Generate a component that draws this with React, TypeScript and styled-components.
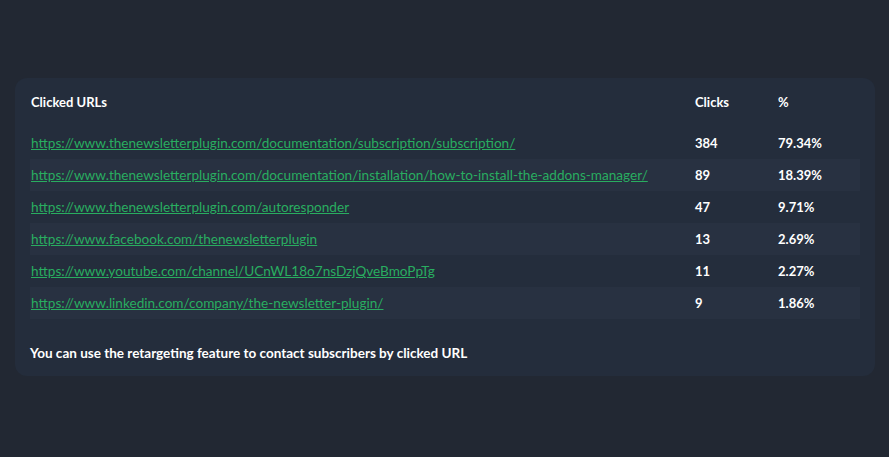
import React from "react";
import styled, { createGlobalStyle } from "styled-components";

const Global = createGlobalStyle`
  html, body { margin: 0; padding: 0; background: #222833; }
  body { font-family: "Segoe UI", "Lato", "Noto Sans", sans-serif; }
`;

const Page = styled.div`
  width: 889px;
  height: 457px;
  background: #222833;
  padding: 78px 14px 0 15px;
  box-sizing: border-box;
`;

const Card = styled.section`
  background: #242d3c;
  border-radius: 12px;
  padding: 15px 15px 14px 15px;
  box-sizing: border-box;
  height: 298px;
`;

const Row = styled.div<{ $striped?: boolean; $head?: boolean }>`
  display: grid;
  grid-template-columns: 1fr 83px 82px;
  align-items: center;
  height: ${(p) => (p.$head ? "18px" : "32px")};
  margin-bottom: ${(p) => (p.$head ? "16px" : "0")};
  background: ${(p) => (p.$striped ? "#283141" : "transparent")};
`;

const HeadCell = styled.div`
  color: #ffffff;
  font-weight: 700;
  font-size: 13px;
  line-height: 18px;
  padding-left: 1px;
`;

const LinkCell = styled.a`
  color: #29ad60;
  font-size: 13.6px;
  line-height: 18px;
  text-decoration: underline;
  padding-left: 1px;
  justify-self: start;
`;

const NumCell = styled.div`
  color: #ffffff;
  font-weight: 700;
  font-size: 13px;
  line-height: 18px;
`;

const Note = styled.p`
  margin: 25px 0 0 0;
  color: #ffffff;
  font-weight: 700;
  font-size: 13.5px;
  line-height: 18px;
`;

const rows = [
  ["https://www.thenewsletterplugin.com/documentation/subscription/subscription/", "384", "79.34%"],
  ["https://www.thenewsletterplugin.com/documentation/installation/how-to-install-the-addons-manager/", "89", "18.39%"],
  ["https://www.thenewsletterplugin.com/autoresponder", "47", "9.71%"],
  ["https://www.facebook.com/thenewsletterplugin", "13", "2.69%"],
  ["https://www.youtube.com/channel/UCnWL18o7nsDzjQveBmoPpTg", "11", "2.27%"],
  ["https://www.linkedin.com/company/the-newsletter-plugin/", "9", "1.86%"],
];

export default function App() {
  return (
    <Page>
      <Global />
      <Card>
        <Row $head>
          <HeadCell>Clicked URLs</HeadCell>
          <NumCell>Clicks</NumCell>
          <NumCell>%</NumCell>
        </Row>
        {rows.map(([url, clicks, pct], i) => (
          <Row key={url} $striped={i % 2 === 1}>
            <LinkCell href="#">{url}</LinkCell>
            <NumCell>{clicks}</NumCell>
            <NumCell>{pct}</NumCell>
          </Row>
        ))}
        <Note>You can use the retargeting feature to contact subscribers by clicked URL</Note>
      </Card>
    </Page>
  );
}
